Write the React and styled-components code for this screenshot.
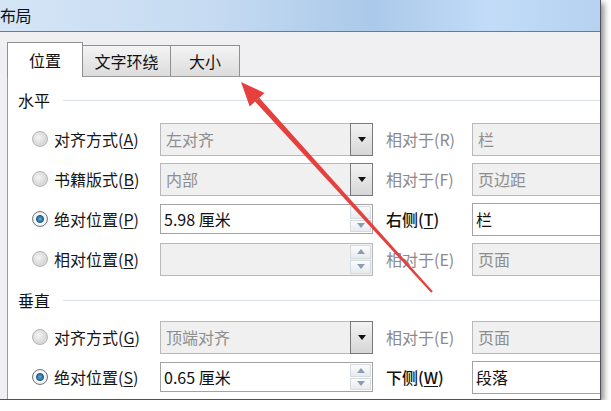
import styled, { createGlobalStyle } from "styled-components";

const GlobalStyle = createGlobalStyle`
  html, body {
    margin: 0;
    padding: 0;
    background: #ffffff;
  }
  body {
    font-family: "Noto Sans CJK SC", "Noto Sans", sans-serif;
  }
`;

const horizontal = [
  { key: "A", label: "对齐方式", kind: "select", value: "左对齐", rel: "相对于(R)", relValue: "栏" },
  { key: "B", label: "书籍版式", kind: "select", value: "内部", rel: "相对于(F)", relValue: "页边距" },
  { key: "P", label: "绝对位置", kind: "spin", value: "5.98 厘米", rel: "右侧", relKey: "T", relValue: "栏", active: true },
  { key: "R", label: "相对位置", kind: "spin", value: "", rel: "相对于(E)", relValue: "页面" },
];

const vertical = [
  { key: "G", label: "对齐方式", kind: "select", value: "顶端对齐", rel: "相对于(E)", relValue: "页面" },
  { key: "S", label: "绝对位置", kind: "spin", value: "0.65 厘米", rel: "下侧", relKey: "W", relValue: "段落", active: true },
];

function Arrow() {
  return (
    <Overlay width="611" height="411" viewBox="0 0 611 411">
      <polygon points="241,82 249.7,106.4 264.5,93" fill="#e5403e" />
      <polygon points="255,101.6 259.2,97.8 432.8,291.3 431.2,292.7" fill="#e5403e" />
    </Overlay>
  );
}

function Triangle({ up, color }) {
  return (
    <svg width="8" height="5" viewBox="0 0 8 5">
      <polygon points={up ? "0,5 8,5 4,0" : "0,0 8,0 4,5"} fill={color} />
    </svg>
  );
}

function Row({ row }) {
  return (
    <RowBox>
      <Radio $checked={row.active} />
      <Label>
        {row.label}(<u>{row.key}</u>)
      </Label>
      <Field $enabled={row.active}>
        <FieldText $enabled={row.active}>{row.value}</FieldText>
        {row.kind === "select" ? (
          <DropButton>
            <Triangle color="#111" />
          </DropButton>
        ) : (
          <Spinner>
            <SpinHalf>
              <Triangle up color={row.key === "P" ? "#e4e8ee" : "#8c9cb8"} />
            </SpinHalf>
            <SpinHalf>
              <Triangle color="#8c9cb8" />
            </SpinHalf>
          </Spinner>
        )}
      </Field>
      <RelLabel $enabled={row.active}>
        {row.relKey ? (
          <>
            {row.rel}(<u>{row.relKey}</u>)
          </>
        ) : (
          row.rel
        )}
      </RelLabel>
      <RelField $enabled={row.active}>
        <FieldText $enabled={row.active}>{row.relValue}</FieldText>
      </RelField>
    </RowBox>
  );
}

export default function App() {
  return (
    <>
      <GlobalStyle />
      <Window>
        <TitleBar>布局</TitleBar>
        <Body>
          <Tabs>
            <Tab $active>位置</Tab>
            <Tab>文字环绕</Tab>
            <Tab>大小</Tab>
          </Tabs>
          <Panel>
            <Section>水平</Section>
            {horizontal.map((r) => (
              <Row key={r.key} row={r} />
            ))}
            <Section $second>垂直</Section>
            {vertical.map((r) => (
              <Row key={r.key} row={r} />
            ))}
          </Panel>
        </Body>
        <Arrow />
      </Window>
    </>
  );
}

const Window = styled.div`
  position: relative;
  width: 601px;
  height: 400px;
  box-sizing: border-box;
  overflow: hidden;
  border-right: 1px solid #4f5358;
  border-bottom: 1px solid #4f5358;
  box-shadow: 3px 3px 6px rgba(0, 0, 0, 0.45);
  display: flex;
  flex-direction: column;
  background: #f0eff2;
`;

const TitleBar = styled.div`
  height: 32px;
  box-sizing: border-box;
  padding-top: 3px;
  font-size: 16px;
  color: #111;
  letter-spacing: -0.5px;
  border-bottom: 1px solid #6c7b8c;
  background: linear-gradient(
    90deg,
    #d4e5f6 0%,
    #c6dbf1 35%,
    #abc9ea 62%,
    #c2dcf8 82%,
    #b6d2f0 100%
  );
`;

const Body = styled.div`
  flex: 1;
  display: flex;
  flex-direction: column;
  padding: 10px 0 0 7px;
`;

const Tabs = styled.div`
  display: flex;
  align-items: flex-end;
  height: 35px;
  position: relative;
  z-index: 1;
  margin-bottom: -1px;
`;

const Tab = styled.div`
  box-sizing: border-box;
  height: ${(p) => (p.$active ? "35px" : "31px")};
  padding: ${(p) => (p.$active ? "0 20px" : "0 10px")};
  margin-left: ${(p) => (p.$active ? "0" : "-1px")};
  margin-bottom: ${(p) => (p.$active ? "0" : "1px")};
  display: flex;
  align-items: center;
  justify-content: center;
  min-width: ${(p) => (p.$active ? "76px" : "70px")};
  font-size: 16px;
  color: #111;
  border: 1px solid #8f9091;
  border-bottom: none;
  background: ${(p) =>
    p.$active ? "#ffffff" : "linear-gradient(#f4f4f4, #dcdcdc)"};
  &:nth-child(2) {
    min-width: 89px;
  }
`;

const Panel = styled.div`
  flex: 1;
  background: #ffffff;
  border-top: 1px solid #9a9a9a;
  border-left: 1px solid #9a9a9a;
`;

const Section = styled.div`
  display: flex;
  align-items: center;
  height: 22px;
  margin: ${(p) => (p.$second ? "10px 0 6px" : "12px 0 8px")};
  padding-left: 10px;
  font-size: 16px;
  color: #111;
  &::after {
    content: "";
    flex: 1;
    height: 1px;
    margin-left: 13px;
    background: #dde3e8;
  }
`;

const RowBox = styled.div`
  display: flex;
  align-items: center;
  height: 40px;
  padding-left: 24px;
  & > * {
    flex: none;
  }
`;

const Radio = styled.span`
  width: 14px;
  height: 14px;
  border-radius: 50%;
  margin-right: 6px;
  border: 1px solid ${(p) => (p.$checked ? "#6d7a86" : "#b3b3b3")};
  background: ${(p) =>
    p.$checked
      ? "radial-gradient(circle, #5fb0dc 0, #1f5f8c 3.5px, #ffffff 4.5px, #e9e9e9 7px)"
      : "radial-gradient(circle at 40% 40%, #f4f4f4 0, #d9d9d9 7px)"};
`;

const Label = styled.span`
  width: 106px;
  font-size: 16px;
  color: #161616;
  white-space: nowrap;
  u {
    text-underline-offset: 2px;
  }
`;

const Field = styled.div`
  width: 213px;
  height: ${(p) => (p.$enabled ? "30px" : "33px")};
  box-sizing: border-box;
  display: flex;
  align-items: stretch;
  border: 1px solid ${(p) => (p.$enabled ? "#a3a3a3" : "#b9b9b9")};
  background: ${(p) => (p.$enabled ? "#ffffff" : "#f0f0f0")};
`;

const FieldText = styled.span`
  flex: 1;
  display: flex;
  align-items: center;
  padding-left: ${(p) => (p.$enabled ? "3px" : "5px")};
  font-size: 16px;
  color: ${(p) => (p.$enabled ? "#111" : "#8e8e8e")};
  white-space: nowrap;
`;

const DropButton = styled.div`
  width: 23px;
  margin: -1px -1px -1px 0;
  box-sizing: border-box;
  border: 1px solid #777a7d;
  display: flex;
  align-items: center;
  justify-content: center;
  background: linear-gradient(#f3f3f3, #d6d6d6);
`;

const Spinner = styled.div`
  width: 21px;
  display: flex;
  flex-direction: column;
  padding: 1px;
  gap: 1px;
`;

const SpinHalf = styled.div`
  flex: 1;
  display: flex;
  align-items: center;
  justify-content: center;
  border: 1px solid #d6dbe0;
  background: linear-gradient(#fafbfc, #e8ebee);
`;

const RelLabel = styled.span`
  width: 86px;
  padding-left: 13px;
  font-size: 16px;
  white-space: nowrap;
  color: ${(p) => (p.$enabled ? "#111" : "#8a8a8a")};
  font-weight: ${(p) => (p.$enabled ? 500 : 400)};
  u {
    text-underline-offset: 2px;
  }
`;

const RelField = styled.div`
  width: 150px;
  height: 33px;
  box-sizing: border-box;
  display: flex;
  border: 1px solid ${(p) => (p.$enabled ? "#a3a3a3" : "#b9b9b9")};
  background: ${(p) => (p.$enabled ? "#ffffff" : "#f0f0f0")};
`;

const Overlay = styled.svg`
  position: absolute;
  left: 0;
  top: 0;
  pointer-events: none;
`;
